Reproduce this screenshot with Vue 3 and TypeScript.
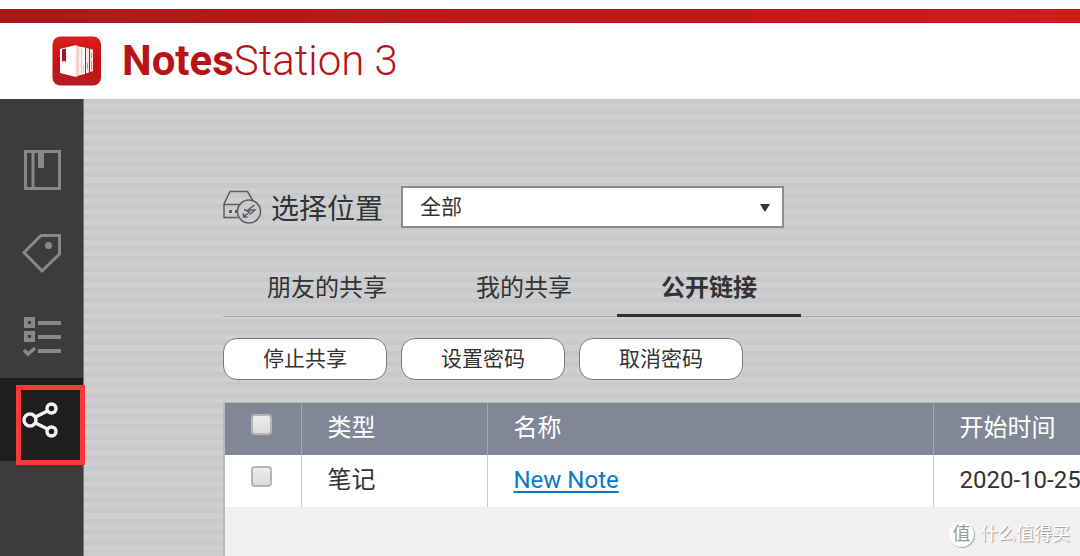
<script setup lang="ts">
import { ref } from 'vue'

type IconName = 'notebook' | 'tag' | 'tasks' | 'share'

const navItems: { icon: IconName; label: string }[] = [
  { icon: 'notebook', label: '笔记本' },
  { icon: 'tag', label: '标签' },
  { icon: 'tasks', label: '任务' },
  { icon: 'share', label: '共享' },
]
const activeNav = ref<IconName>('share')

const tabs = ['朋友的共享', '我的共享', '公开链接']
const activeTab = ref('公开链接')

const actions = ['停止共享', '设置密码', '取消密码']

const place = ref('all')
const rows = ref([{ type: '笔记', name: 'New Note', start: '2020-10-25', checked: false }])

function toggleAll(event: Event) {
  const checked = (event.target as HTMLInputElement).checked
  rows.value.forEach((row) => (row.checked = checked))
}
</script>

<template>
  <div class="app">
    <header class="header">
      <svg class="logo" viewBox="0 0 50 50" aria-hidden="true">
        <defs>
          <linearGradient id="logo-fill" x1="0" y1="0" x2="0" y2="1">
            <stop offset="0" stop-color="#d8201f" />
            <stop offset="0.5" stop-color="#c91113" />
            <stop offset="1" stop-color="#b51d20" />
          </linearGradient>
        </defs>
        <rect x="0.5" y="0.5" width="48.500" height="49" rx="8" fill="url(#logo-fill)" />
        <path d="M8 13 L24 9 V41 L8 37 Z" fill="#fff" />
        <path d="M24 9 L27 10.500 V39.500 L24 41 Z" fill="#f2cfc8" />
        <path d="M27 10.500 L33 11.500 V38 L27 39.500 Z" fill="#fff1ec" />
        <path d="M34 12 L37 12.500 V36.500 L34 37.500 Z M38 13 L41 13.500 V35 L38 36 Z" fill="#fbe3dd" />
        <path d="M29.500 12 V38 M31.500 29 V36" stroke="#eec4bc" fill="none" />
        <path d="M35.500 27 V33 M39.500 17 V22 M39.500 25 V34" stroke="#d98f89" fill="none" />
        <path d="M10 13.500 L14 12.500 V26 L12 24.500 L10 26 Z" fill="#a51228" />
      </svg>
      <h1 class="brand"><b>Notes</b>Station 3</h1>
    </header>

    <div class="body">
      <nav class="sidebar">
        <button
          v-for="item in navItems"
          :key="item.icon"
          type="button"
          class="nav-item"
          :class="{ active: item.icon === activeNav }"
          :aria-label="item.label"
          @click="activeNav = item.icon"
        >
          <svg v-if="item.icon === 'notebook'" viewBox="0 0 42 42" class="icon">
            <path d="M4.500 1.500 H38.500 V38.500 H4.500 Z M12 1 V39" fill="none" stroke="#888" stroke-width="3" />
            <path d="M17 2 H23 V18 H17 Z" fill="#888" />
          </svg>
          <svg v-else-if="item.icon === 'tag'" viewBox="0 0 42 42" class="icon">
            <path d="M20 2.500 H38.500 V21 L21 38 L3 19.500 Z" fill="none" stroke="#888" stroke-width="3" />
            <circle cx="27.500" cy="12.500" r="3.500" fill="#888" />
          </svg>
          <svg v-else-if="item.icon === 'tasks'" viewBox="0 0 42 42" class="icon">
            <path d="M5 3 H12 V10 H5 Z M5 17 H12 V24 H5 Z" fill="none" stroke="#888" stroke-width="4" />
            <path d="M17 7 H40 M17 21 H40 M17 35 H40" stroke="#888" stroke-width="4" />
            <path d="M3 34 L7 38 L14 32" fill="none" stroke="#888" stroke-width="3.500" />
          </svg>
          <svg v-else viewBox="0 0 42 42" class="icon">
            <g fill="none" stroke="#eef1f6" stroke-width="3.400">
              <circle cx="9" cy="21" r="6" />
              <circle cx="30.500" cy="9.500" r="4.500" />
              <circle cx="30.500" cy="32.500" r="4.500" />
              <path d="M14.500 18 L26.500 12 M14.500 24 L26.500 30" />
            </g>
          </svg>
        </button>
        <span class="marker"></span>
      </nav>

      <main class="content">
        <div class="place">
          <svg class="drive" viewBox="0 0 40 36" aria-hidden="true">
            <g fill="none" stroke="#5b5d60" stroke-width="1.500">
              <path d="M15 28.500 H1 V15 L7 2.500 H24.500 L30 12 M1 15.500 H17" />
              <circle cx="26" cy="22.500" r="11.500" />
              <path d="M31.500 16 L25 21 H32 L26.500 25.500 M21 20.500 L26.500 23 L20.500 28 M20.500 24 V28 H24.500" />
            </g>
            <path d="M6 21 H9 V24 H6 Z M12 21 H15 V24 H12 Z" fill="#5b5d60" />
          </svg>
          <label for="place" class="place-label">选择位置</label>
          <div class="select-box">
            <select id="place" v-model="place">
              <option value="all">全部</option>
            </select>
            <svg class="caret" viewBox="0 0 10 8" aria-hidden="true"><path d="M0 0 H10 L5 8 Z" fill="#333" /></svg>
          </div>
        </div>

        <div class="tabs" role="tablist">
          <button
            v-for="tab in tabs"
            :key="tab"
            type="button"
            role="tab"
            class="tab"
            :class="{ active: tab === activeTab }"
            :aria-selected="tab === activeTab"
            @click="activeTab = tab"
          >{{ tab }}</button>
        </div>

        <div class="actions">
          <button v-for="action in actions" :key="action" type="button" class="action">{{ action }}</button>
        </div>

        <div class="panel">
          <table>
            <colgroup>
              <col class="col-check" />
              <col class="col-type" />
              <col class="col-name" />
              <col />
            </colgroup>
            <thead>
              <tr>
                <th class="check"><input type="checkbox" aria-label="全选" @change="toggleAll" /></th>
                <th>类型</th>
                <th>名称</th>
                <th>开始时间</th>
              </tr>
            </thead>
            <tbody>
              <tr v-for="row in rows" :key="row.name">
                <td class="check"><input v-model="row.checked" type="checkbox" :aria-label="row.name" /></td>
                <td>{{ row.type }}</td>
                <td><a href="#">{{ row.name }}</a></td>
                <td>{{ row.start }}</td>
              </tr>
            </tbody>
          </table>
        </div>
      </main>
    </div>

    <div class="watermark"><span class="seal">值</span>什么值得买</div>
  </div>
</template>

<style>
body {
  margin: 0;
}
</style>

<style scoped>
.app {
  position: relative;
  display: flex;
  flex-direction: column;
  min-height: 100vh;
  overflow: hidden;
  font-family: Roboto, "Noto Sans CJK SC", sans-serif;
  color: #333;
  background: #fff;
}
button,
select {
  font: inherit;
  color: inherit;
}
.header {
  display: flex;
  align-items: center;
  gap: 20px;
  height: 76px;
  margin-top: 9px;
  padding-left: 52px;
  border-style: solid;
  border-width: 14px 0 0;
  border-image: linear-gradient(90deg, #a91818, #d01a18) 14;
}
.logo {
  width: 50px;
  height: 50px;
}
.brand {
  margin: 0;
  font-size: 42px;
  line-height: 48px;
  font-weight: 300;
  color: #b91415;
}
.brand b {
  font-weight: 700;
}
.body {
  display: flex;
  flex: 1;
}
.sidebar {
  position: relative;
  box-sizing: border-box;
  flex: none;
  width: 84px;
  padding-top: 30px;
  border-right: 1px solid #777;
  background: #3c3c3c;
}
.nav-item {
  display: flex;
  align-items: center;
  justify-content: center;
  width: 100%;
  height: 83px;
  padding: 0;
  border: 0;
  background: none;
}
.nav-item.active {
  background: #1e1e1e;
}
.icon {
  width: 42px;
  height: 42px;
}
.marker {
  position: absolute;
  top: 286px;
  left: 16px;
  box-sizing: border-box;
  width: 69px;
  height: 80px;
  border: 5px solid #fb3838;
  pointer-events: none;
}
.content {
  display: flex;
  flex: 1;
  flex-direction: column;
  min-width: 0;
  padding: 87px 0 0 139px;
  background: repeating-linear-gradient(#c8c9cb 0 5px, #cecfd1 5px 10px, #c8c9cb 10px 15px, #cecfd1 15px 21px);
}
.place {
  display: flex;
  align-items: center;
}
.drive {
  width: 40px;
  height: 36px;
  margin-right: 8px;
}
.place-label {
  width: 130px;
  padding-top: 6px;
  font-size: 28px;
  line-height: 36px;
}
.select-box {
  position: relative;
  width: 383px;
}
select {
  display: block;
  box-sizing: border-box;
  width: 100%;
  height: 42px;
  padding: 0 17px;
  border: 2px solid #8a8b8d;
  border-radius: 0;
  background: #fff;
  appearance: none;
  font-size: 21px;
}
.caret {
  position: absolute;
  top: 18px;
  right: 14px;
  width: 10px;
  height: 8px;
  pointer-events: none;
}
.tabs {
  display: flex;
  gap: 1px;
  margin-top: 29px;
  border-bottom: 1px solid #aaabad;
}
.tab {
  box-sizing: border-box;
  height: 60px;
  margin-bottom: -1px;
  padding: 0 44px;
  border: 0;
  border-bottom: 3px solid transparent;
  background: none;
  font-size: 24px;
}
.tab.active {
  border-color: #303133;
  font-weight: 700;
}
.actions {
  display: flex;
  gap: 14px;
  margin-top: 21px;
}
.action {
  width: 164px;
  height: 42px;
  padding: 0 0 4px;
  border: 1px solid #77797b;
  border-radius: 14px;
  background: #fff;
  font-size: 21px;
}
.panel {
  flex: 1;
  margin-top: 22px;
  border-top: 1px solid #b4b5b8;
  border-left: 2px solid #b9babc;
  background: #f1f1f1;
}
table {
  width: 100%;
  border-collapse: collapse;
  table-layout: fixed;
  font-size: 24px;
  line-height: 36px;
}
.col-check {
  width: 76px;
}
.col-type {
  width: 186px;
}
.col-name {
  width: 446px;
}
th,
td {
  box-sizing: border-box;
  height: 52px;
  padding: 0 26px 2px;
  text-align: left;
  font-weight: 400;
  white-space: nowrap;
  border-right: 1px solid #c8c9cb;
  background: #fff;
}
th {
  color: #fff;
  background: #818797;
  border-color: #a4a9b5;
}
th:last-child,
td:last-child {
  border-right: 0;
}
input {
  display: block;
  box-sizing: border-box;
  width: 21px;
  height: 21px;
  margin: 0 0 8px;
  border: 2px solid #b5b5b5;
  border-radius: 4px;
  background: linear-gradient(#ececec, #dcdcdc);
  appearance: none;
}
input:checked {
  background: #4b84c4;
}
a {
  color: #0b78c5;
  text-decoration: underline;
  text-decoration-thickness: 2px;
  text-underline-offset: 3px;
}
.watermark {
  position: absolute;
  right: 10px;
  bottom: 9px;
  display: flex;
  align-items: center;
  gap: 6px;
  font-size: 18px;
  line-height: 26px;
  color: #fff;
  text-shadow: 1px 1px 1px #999;
}
.seal {
  width: 25px;
  height: 25px;
  border-radius: 50%;
  background: #fff;
  box-shadow: 1px 1px 1px #aaa;
  color: #999;
  line-height: 24px;
  text-align: center;
  text-shadow: none;
}
</style>
